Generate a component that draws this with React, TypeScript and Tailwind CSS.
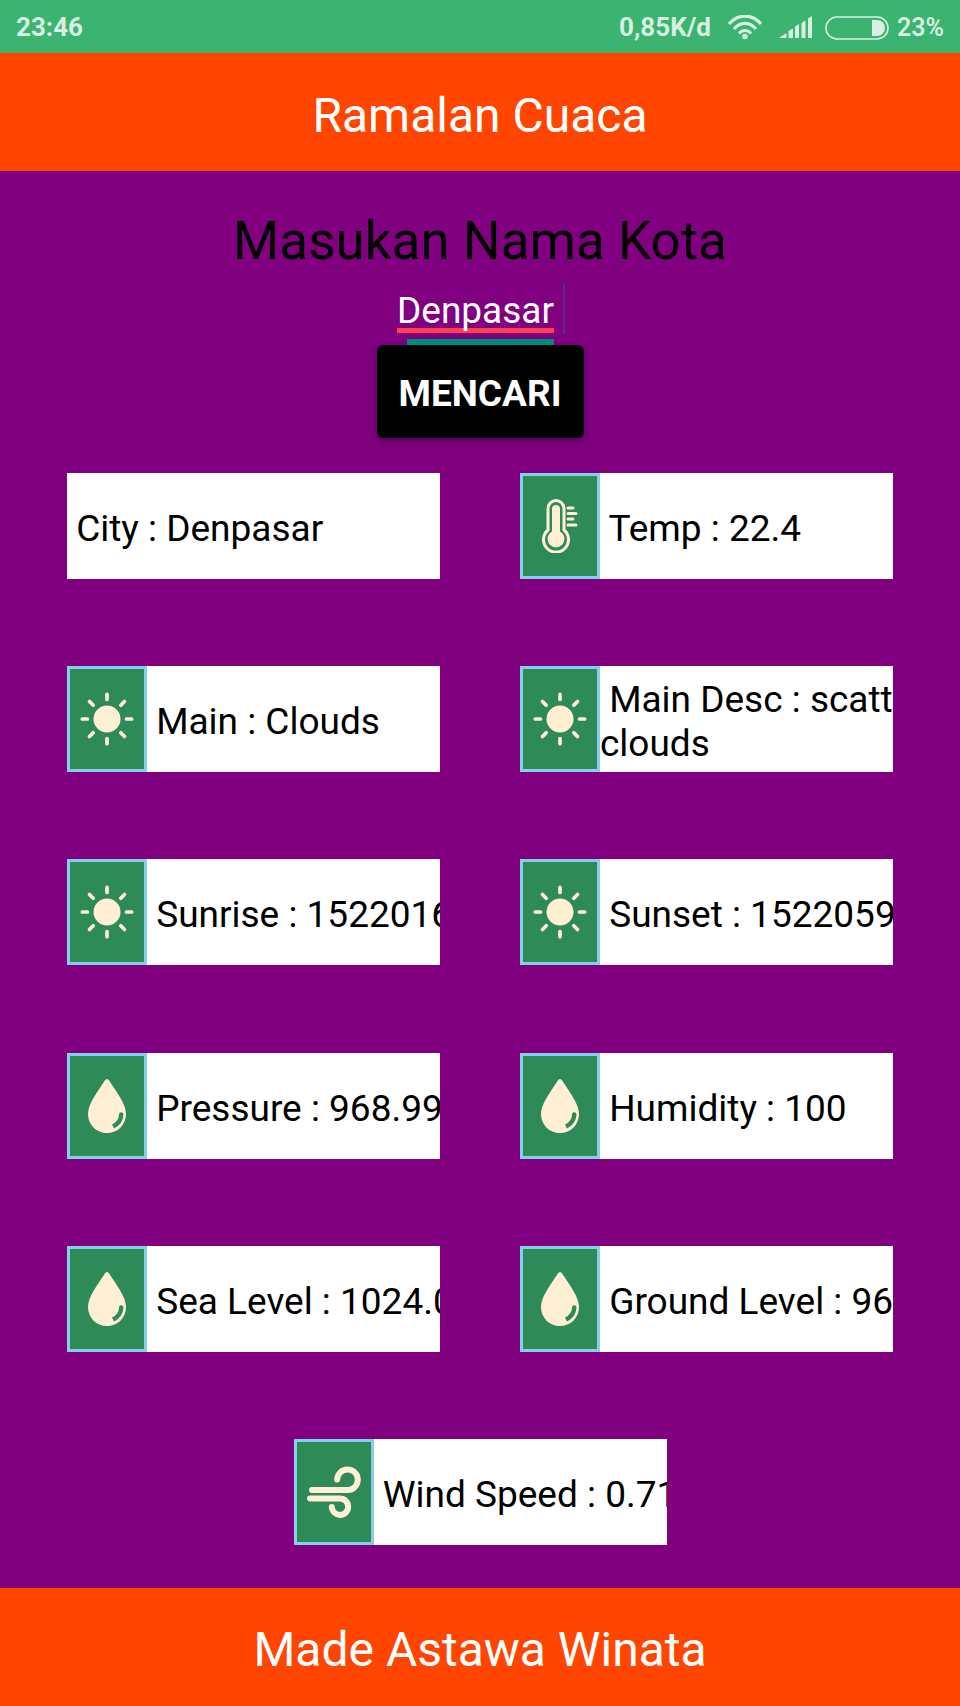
import React from "react";

type IconName = "temp" | "sun" | "drop" | "wind";

function Thermometer() {
  return (
    <svg viewBox="0 0 54 54" className="size-[54px] shrink-0" fill="none" stroke="#FFEFD5" aria-hidden="true">
      <path d="M15 31 V9.5 a8 8 0 0 1 16 0 V31 a12.5 12.5 0 1 1 -16 0 Z" strokeWidth="3" strokeLinejoin="round" />
      <path d="M23 10 V38" strokeWidth="8" strokeLinecap="round" />
      <circle cx="23" cy="40" r="8.5" fill="#FFEFD5" stroke="none" />
      <path d="M35 9 h5 M35 14.500 h8 M35 20 h5 M35 26 h8" strokeWidth="3" strokeLinecap="round" />
    </svg>
  );
}

function Sun() {
  return (
    <svg viewBox="0 0 54 54" className="size-[54px] shrink-0" fill="none" stroke="#FFEFD5" aria-hidden="true">
      <circle cx="27" cy="27" r="13.5" fill="#FFEFD5" stroke="none" />
      <g strokeWidth="3.7" strokeLinecap="round">
        <path d="M27 2.300 V7.500 M27 46.500 V51.700 M2.300 27 H7.500 M46.500 27 H51.700" />
        <path d="M9.500 9.500 L13.200 13.200 M40.800 40.800 L44.500 44.500 M44.500 9.500 L40.800 13.200 M13.200 40.800 L9.500 44.500" />
      </g>
    </svg>
  );
}

function Drop() {
  return (
    <svg viewBox="0 0 54 54" className="size-[54px] shrink-0" aria-hidden="true">
      <path
        d="M27 0 C28 0 28.800 .8 30 2.700 C35 11 46 24 46 35 C46 46 37.500 54 27 54 C16.500 54 8 46 8 35 C8 24 19 11 24 2.700 C25.200 .8 26 0 27 0 Z"
        fill="#FFEFD5"
      />
      <path d="M41.200 35.500 Q41 43.500 33 47.500" fill="none" stroke="#2E8B57" strokeWidth="4.400" />
      <circle cx="41.200" cy="35.500" r="2.200" fill="#2E8B57" />
    </svg>
  );
}

function Wind() {
  return (
    <svg viewBox="0 0 54 54" className="size-[54px] shrink-0" fill="none" stroke="#FFEFD5" strokeWidth="6" strokeLinecap="round" aria-hidden="true">
      <path d="M5 25 H40.500 a10.300 10.300 0 1 0 -10.300 -10.500" />
      <path d="M3 33.500 H33 a8.200 8.200 0 1 1 -8.200 8.500" />
    </svg>
  );
}

const icons: Record<IconName, () => React.JSX.Element> = {
  temp: Thermometer,
  sun: Sun,
  drop: Drop,
  wind: Wind,
};

function Card({ text, icon }: { text: string; icon?: IconName }) {
  const Icon = icon ? icons[icon] : null;
  return (
    <div className="flex h-[106px] w-[373px] overflow-hidden bg-white">
      {Icon && (
        <div className="flex w-20 shrink-0 items-center justify-center border-[3px] border-[#87CEEB] bg-[#2E8B57]">
          <Icon />
        </div>
      )}
      <p className="min-w-0 flex-1 self-center overflow-hidden whitespace-pre pt-1.5 text-[37px] leading-[44px] text-black">
        {text}
      </p>
    </div>
  );
}

const rows: { text: string; icon?: IconName }[][] = [
  [{ text: " City : Denpasar" }, { text: " Temp : 22.4", icon: "temp" }],
  [
    { text: " Main : Clouds", icon: "sun" },
    { text: " Main Desc : scatt\nclouds", icon: "sun" },
  ],
  [
    { text: " Sunrise : 1522016", icon: "sun" },
    { text: " Sunset : 1522059", icon: "sun" },
  ],
  [
    { text: " Pressure : 968.99", icon: "drop" },
    { text: " Humidity : 100", icon: "drop" },
  ],
  [
    { text: " Sea Level : 1024.0", icon: "drop" },
    { text: " Ground Level : 96", icon: "drop" },
  ],
  [{ text: " Wind Speed : 0.71", icon: "wind" }],
];

function StatusBar() {
  return (
    <div className="flex h-[53px] shrink-0 items-center justify-between bg-[#3CB371] px-4 pt-0.5 text-[26px] font-bold text-[#D8F0E2]">
      <span>23:46</span>
      <div className="flex items-center">
        <span>0,85K/d</span>
        <svg viewBox="0 0 36 26" className="ml-4 h-[26px] w-9" fill="none" stroke="#D8F0E2" strokeWidth="3.200" aria-hidden="true">
          <path d="M2 9 C11 -1.500 25 -1.500 34 9" />
          <path d="M7 14 C13.500 6.500 22.500 6.500 29 14" />
          <path d="M12 18.500 C15.500 14.500 20.500 14.500 24 18.500" />
          <circle cx="18" cy="21.500" r="2.800" fill="#D8F0E2" stroke="none" />
        </svg>
        <svg viewBox="0 0 34 24" className="ml-4 h-6 w-[34px]" fill="#D8F0E2" aria-hidden="true">
          <path d="M0 22 L7.500 17 V22 Z M9.500 15 L14 12.500 V22 H9.500 Z M16 10.500 L20 8 V22 H16 Z M22.500 7 L26.500 4.500 V22 H22.500 Z M29 2.500 L33 0 V22 H29 Z" />
        </svg>
        <svg viewBox="0 0 64 24" className="ml-3 h-6 w-16" aria-hidden="true">
          <rect x="1" y="1" width="62" height="22" rx="11" fill="none" stroke="#D8F0E2" strokeWidth="1.600" />
          <path d="M47 4 H52 a8 8 0 0 1 0 16 H47 Z" fill="#D8F0E2" />
        </svg>
        <span className="ml-2 text-[25px] font-semibold">23%</span>
      </div>
    </div>
  );
}

export default function App() {
  return (
    <div className="flex min-h-screen flex-col bg-[#800080] font-['Roboto',sans-serif]">
      <StatusBar />
      <header className="flex h-[118px] shrink-0 items-center justify-center bg-[#FF4500] pt-2">
        <h1 className="text-[48px] leading-[56px] text-white">Ramalan Cuaca</h1>
      </header>
      <main className="flex flex-1 flex-col pb-[43px]">
        <form className="flex flex-col items-center pt-[39px]" onSubmit={(e) => e.preventDefault()}>
          <label htmlFor="city" className="text-[53px] leading-[62px] text-black">
            Masukan Nama Kota
          </label>
          <div className="relative mt-3 flex h-[61px] w-[170px] flex-col items-center">
            <input
              id="city"
              type="text"
              defaultValue="Denpasar"
              className="h-[50px] w-full bg-transparent pt-1 pl-0.5 text-[37px] text-white underline decoration-[#FF4050] decoration-[5px] underline-offset-[5px] outline-none [text-decoration-skip-ink:none]"
            />
            <span className="absolute top-0 right-0 h-[50px] w-0.5 bg-[#5B2C86]" />
            <span className="absolute bottom-0 h-1.5 w-[147px] bg-[#008B80]" />
          </div>
          <button
            type="submit"
            className="h-[93px] w-[207px] rounded-md bg-black pt-1 text-[37px] font-bold text-white shadow-[0_3px_8px_rgba(0,0,0,0.35)]"
          >
            MENCARI
          </button>
        </form>
        <div className="mt-[35px] flex flex-1 flex-col justify-between gap-4 px-[27px]">
          {rows.map((row, i) => (
            <div key={i} className="flex justify-around">
              {row.map((card) => (
                <Card key={card.text} {...card} />
              ))}
            </div>
          ))}
        </div>
      </main>
      <footer className="flex h-[118px] shrink-0 items-center justify-center bg-[#FF4500] pt-1.5 text-[48px] leading-[56px] text-white">
        Made Astawa Winata
      </footer>
    </div>
  );
}
